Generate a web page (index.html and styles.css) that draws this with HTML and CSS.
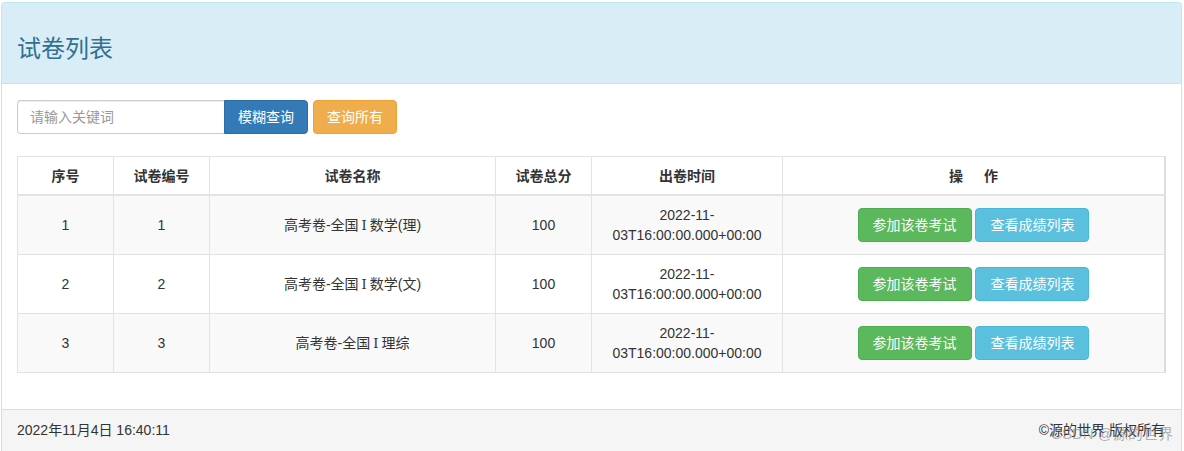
FILE: index.html
```html
<!DOCTYPE html>
<html lang="zh-CN">
<head>
    <meta charset="UTF-8">
    <title>试卷列表</title>
    <link rel="stylesheet" href="styles.css">
</head>
<body>
    <div class="panel">
        <div class="panel-heading">
            <h3 class="panel-title">试卷列表</h3>
        </div>

        <div class="panel-body">
            <div class="search-bar">
                <div class="input-group">
                    <input type="text" class="search-input" placeholder="请输入关键词">
                    <button class="btn btn-primary">模糊查询</button>
                </div>
                <button class="btn btn-warning">查询所有</button>
            </div>

            <table class="paper-table">
                <colgroup>
                    <col style="width: 96px">
                    <col style="width: 96px">
                    <col style="width: 286px">
                    <col style="width: 96px">
                    <col style="width: 191px">
                    <col>
                </colgroup>
                <thead>
                    <tr>
                        <th>序号</th>
                        <th>试卷编号</th>
                        <th>试卷名称</th>
                        <th>试卷总分</th>
                        <th>出卷时间</th>
                        <th>操&emsp;&ensp;作</th>
                    </tr>
                </thead>
                <tbody>
                    <tr>
                        <td>1</td>
                        <td>1</td>
                        <td>高考卷-全国<span class="roman">Ⅰ</span>数学(理)</td>
                        <td>100</td>
                        <td>2022-11-03T16:00:00.000+00:00</td>
                        <td>
                            <button class="btn btn-success">参加该卷考试</button>
                            <button class="btn btn-info">查看成绩列表</button>
                        </td>
                    </tr>
                    <tr>
                        <td>2</td>
                        <td>2</td>
                        <td>高考卷-全国<span class="roman">Ⅰ</span>数学(文)</td>
                        <td>100</td>
                        <td>2022-11-03T16:00:00.000+00:00</td>
                        <td>
                            <button class="btn btn-success">参加该卷考试</button>
                            <button class="btn btn-info">查看成绩列表</button>
                        </td>
                    </tr>
                    <tr>
                        <td>3</td>
                        <td>3</td>
                        <td>高考卷-全国<span class="roman">Ⅰ</span>理综</td>
                        <td>100</td>
                        <td>2022-11-03T16:00:00.000+00:00</td>
                        <td>
                            <button class="btn btn-success">参加该卷考试</button>
                            <button class="btn btn-info">查看成绩列表</button>
                        </td>
                    </tr>
                </tbody>
            </table>
        </div>

        <div class="panel-footer">
            <span>2022年11月4日 16:40:11</span>
            <span>©源的世界 版权所有</span>
            <span class="watermark">CSDN @源的世界</span>
        </div>
    </div>
</body>
</html>
```

FILE: styles.css
```css
body {
    margin: 0;
    padding: 2px 2px 0 1px;
    font-family: "Liberation Sans", "Noto Sans CJK SC", sans-serif;
    font-size: 14px;
    line-height: 20px;
    color: #333;
    background: #fff;
}

/* Panel */
.panel {
    border: 1px solid #bce8f1;
    border-bottom: none;
    border-radius: 4px 4px 0 0;
    background: #fff;
}

.panel-heading {
    background: #d9edf7;
    color: #31708f;
    padding: 10px 15px;
    border-bottom: 1px solid #bce8f1;
    border-radius: 3px 3px 0 0;
}

.panel-title {
    margin: 23px 0 11px;
    font-size: 24px;
    font-weight: normal;
    line-height: 26px;
}

.panel-body {
    padding: 16px 15px 36px;
}

.panel-footer {
    position: relative;
    display: flex;
    justify-content: space-between;
    padding: 10px 16px 11px 15px;
    background: #f5f5f5;
    border-top: 1px solid #ddd;
}

.watermark {
    position: absolute;
    right: 8px;
    top: 14px;
    font-size: 15px;
    color: rgba(130, 130, 130, 0.6);
}

/* Search */
.search-bar {
    display: flex;
    gap: 5px;
    margin-bottom: 22px;
}

.input-group {
    display: flex;
}

.search-input {
    width: 207px;
    height: 34px;
    box-sizing: border-box;
    padding: 6px 12px;
    border: 1px solid #ccc;
    border-right: none;
    border-radius: 4px 0 0 4px;
    font-family: inherit;
    font-size: 14px;
    color: #555;
    box-shadow: inset 0 1px 1px rgba(0, 0, 0, 0.075);
}

.search-input::placeholder {
    color: #999;
}

.input-group .btn {
    border-radius: 0 4px 4px 0;
}

/* Buttons */
.btn {
    height: 34px;
    padding: 6px 13px;
    border: 1px solid transparent;
    border-radius: 4px;
    font-family: inherit;
    font-size: 14px;
    line-height: 20px;
    color: #fff;
    cursor: pointer;
}

.btn-primary {
    background: #337ab7;
    border-color: #2e6da4;
}

.btn-warning {
    background: #f0ad4e;
    border-color: #eea236;
}

.btn-success {
    background: #5cb85c;
    border-color: #4cae4c;
    padding: 6px 14px;
}

.btn-info {
    background: #5bc0de;
    border-color: #46b8da;
    padding: 6px 14px;
}

/* Table */
.paper-table {
    width: 100%;
    border-collapse: collapse;
    table-layout: fixed;
    border: 1px solid #ddd;
    border-right-width: 2px;
}

.paper-table th,
.paper-table td {
    border: 1px solid #e3e3e3;
    text-align: center;
    vertical-align: middle;
}

.paper-table th {
    padding: 9px 8px 8px;
    font-weight: bold;
    border-bottom-width: 2px;
}

.paper-table td {
    padding: 9px 8px;
}

.paper-table tbody tr:nth-child(odd) {
    background: #f9f9f9;
}

.roman {
    font-family: "DejaVu Serif", "Liberation Serif", serif;
    font-size: 13px;
    margin: 0 3px;
}
```
